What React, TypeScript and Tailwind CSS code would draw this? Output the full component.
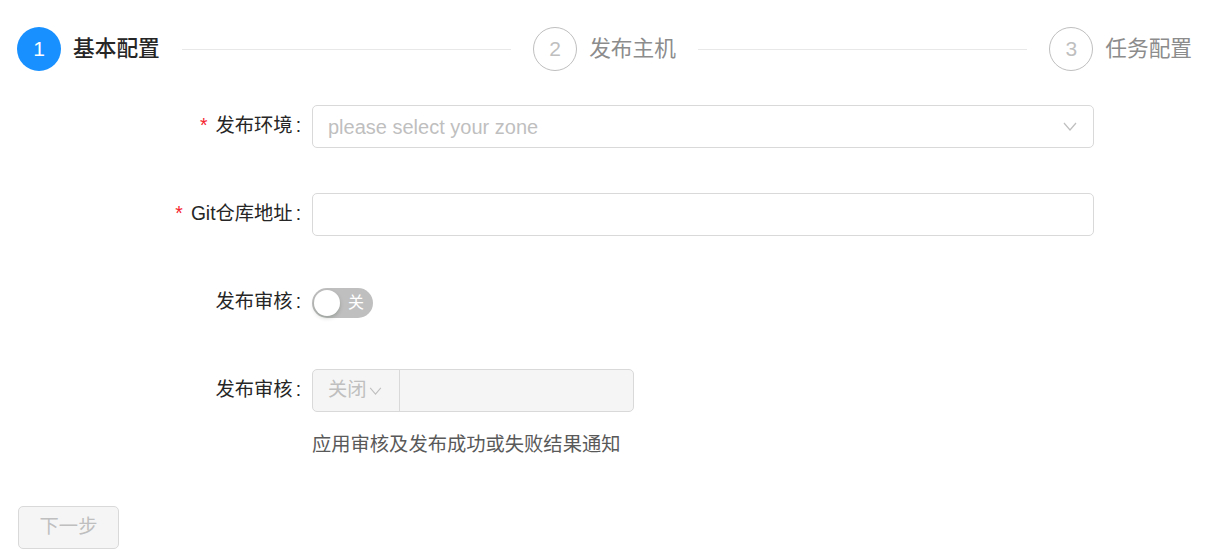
const font = { fontFamily: '"Liberation Sans", "Noto Sans CJK SC", sans-serif' };

function Chevron({ className }: { className: string }) {
    return (
        <svg className={className} viewBox="0 0 14 9" fill="none" stroke="currentColor" strokeWidth={1.2}>
            <polyline points="1,1 7,8 13,1" />
        </svg>
    );
}

function Step({ n, title, active, last }: { n: number; title: string; active?: boolean; last?: boolean }) {
    return (
        <div className={last ? 'flex flex-none items-center' : 'flex flex-1 items-center'}>
            {active ? (
                <div className="flex h-[44px] w-[44px] flex-none items-center justify-center rounded-full bg-[#1890ff] text-[21px] text-white">
                    {n}
                </div>
            ) : (
                <div className="flex h-[44px] w-[44px] flex-none items-center justify-center rounded-full border border-[#bfbfbf] text-[21px] text-[#bfbfbf]">
                    {n}
                </div>
            )}
            <span
                className={
                    active
                        ? 'ml-[12px] text-[21.7px] font-medium text-[#262626]'
                        : 'ml-[12px] text-[21.7px] text-[#8c8c8c]'
                }
            >
                {title}
            </span>
            {!last && <div className="mx-[22px] h-px flex-1 bg-[#e8e8e8]" />}
        </div>
    );
}

function Label({ text, required }: { text: string; required?: boolean }) {
    return (
        <div className="flex w-[312px] flex-none items-center justify-end text-[19.3px] text-[#262626]">
            {required && <span className="mr-[8px] text-[#f5222d]">*</span>}
            <span>{text}</span>
            <span className="ml-[3px] mr-[11px]">:</span>
        </div>
    );
}

export default function App() {
    return (
        <div className="min-h-screen bg-white" style={font}>
            {/* Steps */}
            <div className="flex items-center pl-[17px] pr-[25px] pt-[27px]">
                <Step n={1} title="基本配置" active />
                <Step n={2} title="发布主机" />
                <Step n={3} title="任务配置" last />
            </div>

            {/* Form */}
            <div className="mt-[34px] flex flex-col gap-[45px]">
                <div className="flex h-[43px] items-center">
                    <Label text="发布环境" required />
                    <div className="flex h-[43px] w-[782px] items-center justify-between rounded-[5px] border border-[#d9d9d9] pl-[15px] pr-[16px]">
                        <span className="text-[20px] text-[#bfbfbf]">please select your zone</span>
                        <Chevron className="h-[9px] w-[14px] text-[#bfbfbf]" />
                    </div>
                </div>

                <div className="flex h-[43px] items-center">
                    <Label text="Git仓库地址" required />
                    <div className="h-[43px] w-[782px] rounded-[5px] border border-[#d9d9d9]" />
                </div>

                <div className="flex h-[43px] items-center">
                    <Label text="发布审核" />
                    <div className="flex h-[30px] w-[61px] items-center rounded-full bg-[#bfbfbf] pl-[2px]">
                        <div className="h-[26px] w-[26px] rounded-full bg-white shadow-[0_2px_4px_rgba(0,35,11,0.2)]" />
                        <span className="ml-[8px] text-[16px] text-white">关</span>
                    </div>
                </div>

                <div className="flex h-[43px] items-center">
                    <Label text="发布审核" />
                    <div className="flex h-[43px] w-[322px] rounded-[5px] border border-[#d9d9d9] bg-[#f5f5f5]">
                        <div className="flex w-[87px] items-center border-r border-[#d9d9d9] pl-[15px] text-[19.3px] text-[#bfbfbf]">
                            <span>关闭</span>
                            <Chevron className="ml-[2px] h-[8px] w-[13px] text-[#bfbfbf]" />
                        </div>
                        <div className="flex-1" />
                    </div>
                </div>
            </div>

            <div className="ml-[312px] mt-[20px] text-[19.3px] leading-[26px] text-[#595959]">
                应用审核及发布成功或失败结果通知
            </div>

            <div className="pl-[18px] pt-[48px]">
                <div className="flex h-[43px] w-[101px] items-center justify-center rounded-[5px] border border-[#d9d9d9] bg-[#f5f5f5] text-[19.3px] text-[#bfbfbf]">
                    下一步
                </div>
            </div>
        </div>
    );
}
